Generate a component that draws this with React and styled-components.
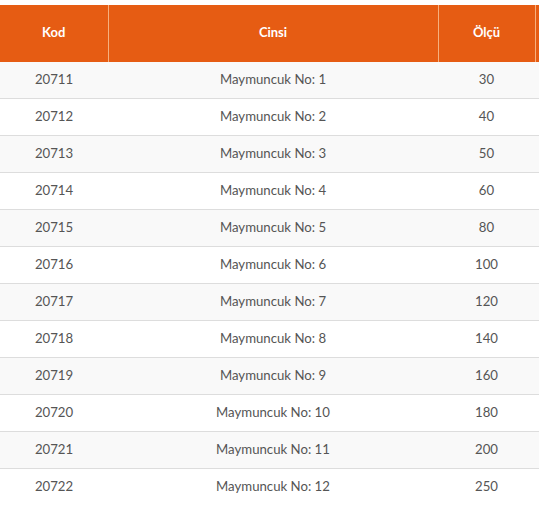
import React from 'react'
import styled, { createGlobalStyle } from 'styled-components'

const GlobalStyle = createGlobalStyle`
  html, body {
    margin: 0;
    padding: 0;
    background: #fff;
    overflow: hidden;
  }
`

const colours = {
  orange: '#e65c13',
  divider: '#f6b07f',
  text: '#555',
  stripe: '#f9f9f9',
  rule: '#dddddd'
}

const Wrap = styled.div`
  padding-top: 5px;
  width: 640px;
  font-family: Lato, 'Liberation Sans', sans-serif;
`

const Table = styled.table`
  width: 640px;
  border-collapse: collapse;
  table-layout: fixed;
`

const HeadCell = styled.th`
  height: 54px;
  padding: 0 0 2px;
  background: ${colours.orange};
  color: #fff;
  font-size: 13px;
  font-weight: 700;
  text-align: center;
  border-left: 1px solid ${colours.divider};

  &:first-child {
    border-left: none;
  }
`

const Row = styled.tr`
  background: ${({ $odd }) => ($odd ? colours.stripe : '#fff')};
  border-top: 1px solid ${({ $first }) => ($first ? 'transparent' : colours.rule)};
`

const Cell = styled.td`
  height: 33px;
  padding: 0 0 3px;
  color: ${colours.text};
  font-size: 13.2px;
  text-align: center;
`

const items = [
  ['20711', 1, 30],
  ['20712', 2, 40],
  ['20713', 3, 50],
  ['20714', 4, 60],
  ['20715', 5, 80],
  ['20716', 6, 100],
  ['20717', 7, 120],
  ['20718', 8, 140],
  ['20719', 9, 160],
  ['20720', 10, 180],
  ['20721', 11, 200],
  ['20722', 12, 250]
]

export default function App() {
  return (
    <>
      <GlobalStyle />
      <Wrap>
        <Table>
          <colgroup>
            <col style={{ width: 108 }} />
            <col style={{ width: 330 }} />
            <col style={{ width: 97 }} />
            <col />
          </colgroup>
          <thead>
            <tr>
              <HeadCell>Kod</HeadCell>
              <HeadCell>Cinsi</HeadCell>
              <HeadCell>Ölçü</HeadCell>
              <HeadCell />
            </tr>
          </thead>
          <tbody>
            {items.map(([code, no, size], i) => (
              <Row key={code} $odd={i % 2 === 0} $first={i === 0}>
                <Cell>{code}</Cell>
                <Cell>Maymuncuk No: {no}</Cell>
                <Cell>{size}</Cell>
                <Cell />
              </Row>
            ))}
          </tbody>
        </Table>
      </Wrap>
    </>
  )
}
